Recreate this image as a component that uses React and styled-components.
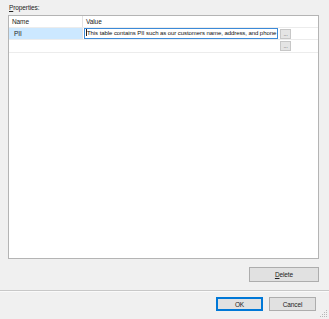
import React from "react";
import styled, { createGlobalStyle } from "styled-components";

const GlobalStyle = createGlobalStyle`
  html, body {
    margin: 0;
    padding: 0;
    background: #f0f0f0;
  }
  body {
    font-family: "Liberation Sans", Arial, sans-serif;
    font-size: 6px;
    color: #111;
  }
`;

const Dialog = styled.div`
  position: relative;
  width: 329px;
  height: 319px;
  display: flex;
  flex-direction: column;
  background: #f0f0f0;
  overflow: hidden;
`;

const Content = styled.div`
  display: flex;
  flex-direction: column;
  padding: 3px 10px 0 8px;
`;

const Label = styled.div`
  font-size: 6.5px;
  line-height: 10px;
  height: 12px;
  padding-left: 1px;
  letter-spacing: -0.1px;
  color: #222;

  u {
    text-decoration: underline;
  }
`;

const GridBox = styled.div`
  height: 242px;
  background: #fff;
  border: 1px solid #b4b4b4;
`;

const Row = styled.div`
  display: grid;
  grid-template-columns: 74px 1fr;
  height: 11px;
  border-bottom: 1px solid #ececec;
`;

const Cell = styled.div`
  display: flex;
  align-items: center;
  padding-left: ${(p) => p.$pad || 3}px;
  font-size: 6.5px;
  line-height: 10px;
  letter-spacing: -0.1px;
  white-space: nowrap;
  overflow: hidden;
  color: #222;
  background: ${(p) => (p.$selected ? "#cce8ff" : "transparent")};
  border-right: ${(p) => (p.$divider ? "1px solid #e3e3e3" : "none")};
`;

const ValueCell = styled.div`
  display: flex;
  align-items: center;
  gap: 2px;
  padding-left: 1px;
`;

const Edit = styled.div`
  width: 194px;
  height: 11px;
  box-sizing: border-box;
  border: 1px solid #3c8ad8;
  background: #fff;
  font-size: 6px;
  line-height: 9px;
  letter-spacing: -0.07px;
  padding-left: 1px;
  white-space: nowrap;
  overflow: hidden;
  color: #111;
`;

const Caret = styled.span`
  display: inline-block;
  width: 1px;
  height: 7px;
  background: #222;
  vertical-align: -1px;
`;

const DotsButton = styled.div`
  flex: none;
  width: 11px;
  height: 10px;
  box-sizing: border-box;
  border: 1px solid #c7c7c7;
  background: #e4e4e4;
  color: #555;
  font-size: 6px;
  line-height: 9px;
  letter-spacing: -0.3px;
  text-align: center;
  overflow: hidden;
`;

const EmptyRow = styled.div`
  display: flex;
  justify-content: flex-end;
  height: 12px;
  align-items: center;
  padding-right: 27px;
  border-bottom: 1px solid #ececec;
`;

const DeleteBar = styled.div`
  display: flex;
  justify-content: flex-end;
  margin-top: 8px;
`;

const Button = styled.div`
  box-sizing: border-box;
  width: ${(p) => p.$width}px;
  height: ${(p) => p.$height}px;
  display: flex;
  align-items: center;
  justify-content: center;
  background: #e1e1e1;
  border: ${(p) => (p.$default ? "1px solid #0078d7" : "1px solid #adadad")};
  box-shadow: ${(p) => (p.$default ? "inset 0 0 0 1px #0078d7" : "none")};
  font-size: 6.5px;
  letter-spacing: -0.1px;
  color: #222;

  u {
    text-decoration: underline;
  }
`;

const Separator = styled.div`
  margin-top: 8px;
  height: 0;
  border-top: 1px solid #c8c8c8;
  border-bottom: 1px solid #fafafa;
`;

const Footer = styled.div`
  display: flex;
  justify-content: flex-end;
  gap: 6px;
  padding: 5px 13px 0 0;
`;

const Grip = styled.svg`
  position: absolute;
  right: 1px;
  bottom: 1px;
`;

export default function App() {
  return (
    <Dialog>
      <GlobalStyle />
      <Content>
        <Label>
          <u>P</u>roperties:
        </Label>
        <GridBox>
          <Row>
            <Cell $divider>Name</Cell>
            <Cell>Value</Cell>
          </Row>
          <Row>
            <Cell $selected $divider $pad={5}>
              PII
            </Cell>
            <ValueCell>
              <Edit>
                <Caret />
                This table contains PII such as our customers name, address, and phone
              </Edit>
              <DotsButton>...</DotsButton>
            </ValueCell>
          </Row>
          <EmptyRow>
            <DotsButton>...</DotsButton>
          </EmptyRow>
        </GridBox>
        <DeleteBar>
          <Button $width={70} $height={15}>
            <u>D</u>elete
          </Button>
        </DeleteBar>
      </Content>
      <Separator />
      <Footer>
        <Button $width={47} $height={14} $default>
          OK
        </Button>
        <Button $width={47} $height={14}>
          Cancel
        </Button>
      </Footer>
      <Grip width="8" height="8" viewBox="0 0 8 8">
        <g fill="#b8b8b8">
          <rect x="6" y="0" width="1" height="1" />
          <rect x="4" y="2" width="1" height="1" />
          <rect x="6" y="2" width="1" height="1" />
          <rect x="2" y="4" width="1" height="1" />
          <rect x="4" y="4" width="1" height="1" />
          <rect x="6" y="4" width="1" height="1" />
          <rect x="0" y="6" width="1" height="1" />
          <rect x="2" y="6" width="1" height="1" />
          <rect x="4" y="6" width="1" height="1" />
          <rect x="6" y="6" width="1" height="1" />
        </g>
      </Grip>
    </Dialog>
  );
}
